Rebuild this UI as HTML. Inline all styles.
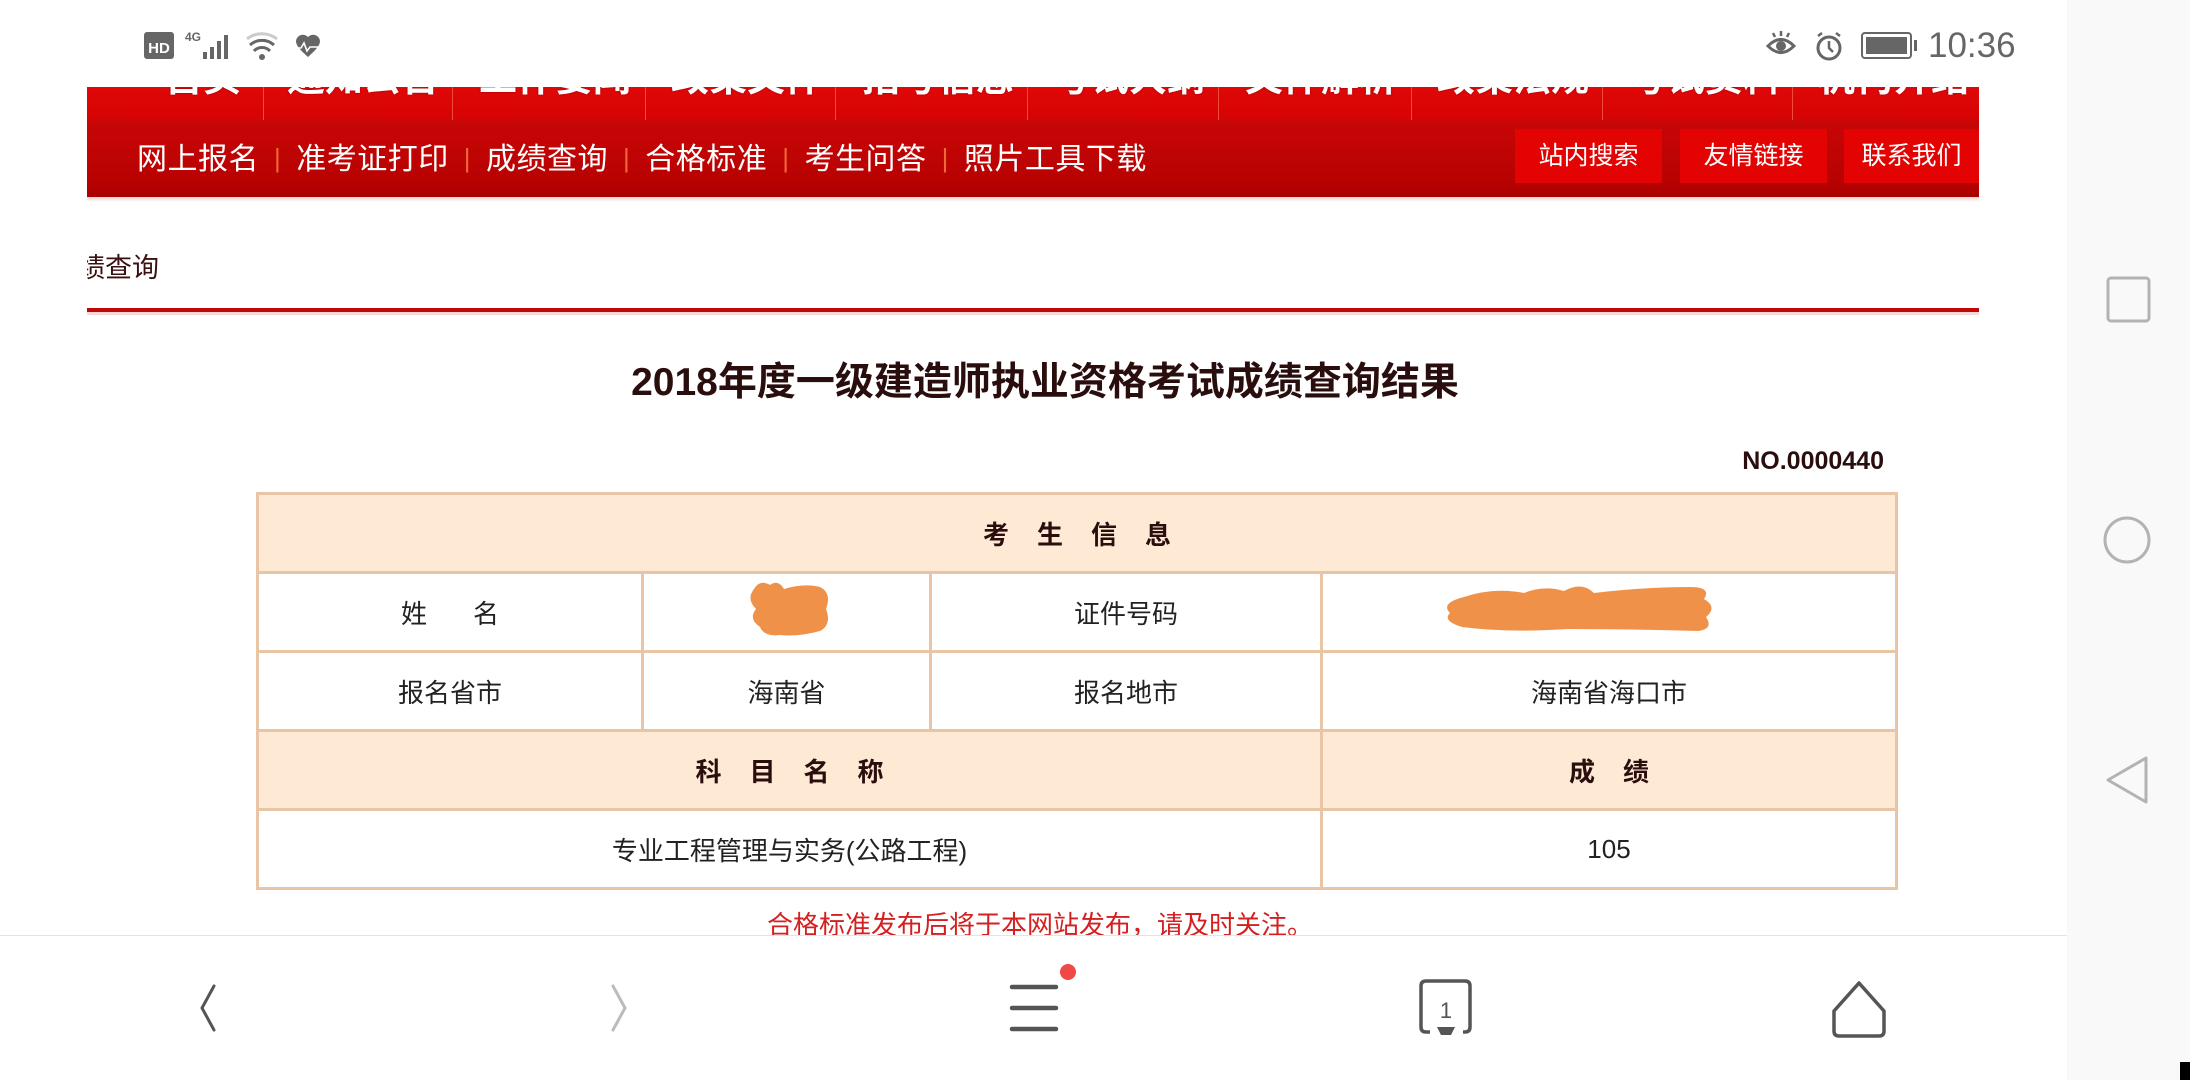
<!DOCTYPE html>
<html><head><meta charset="utf-8">
<style>
*{margin:0;padding:0;box-sizing:border-box}
body{width:2190px;height:1080px;overflow:hidden;background:#fff;position:relative;font-family:"Liberation Sans","Noto Sans CJK SC",sans-serif}
.abs{position:absolute}
.panel{left:2067px;top:0;width:123px;height:1080px;background:#f9f9f9}
.top{left:87px;top:87px;width:1892px;height:33px;background:linear-gradient(#e00808,#d50303);overflow:hidden}
.top span{position:absolute;top:-40px;color:#fff;font-weight:bold;font-size:38px;text-shadow:0 0 2px #900}
.top i{position:absolute;top:0;width:1px;height:33px;background:#f04a3a}
.sub{left:87px;top:120px;width:1892px;height:77px;background:linear-gradient(#c80606,#b80202 80%,#a80000)}
.sub .l{position:absolute;left:50px;top:14px;color:#fff;font-size:30px;letter-spacing:0.5px;white-space:nowrap}
.sub .l b{font-weight:normal;color:#f0683a;margin:0 15px;font-size:26px;position:relative;top:-2px}
.btn{position:absolute;top:9px;height:54px;background:#e30303;color:#fff;font-size:25px;text-align:center;line-height:54px}
table{position:absolute;left:256px;top:492px;width:1642px;border-collapse:collapse}
td{border:3px solid #e9c5a5;height:79px;text-align:center;font-size:26px;color:#222}
td.h{background:#fde9d4;color:#2a0e0e;font-weight:bold;letter-spacing:28px;padding-left:28px}
</style></head><body>
<svg class="abs" style="left:140px;top:26px" width="190" height="40" viewBox="0 0 190 40">
<rect x="4" y="6" width="30" height="27" rx="3" fill="#666"/>
<text x="19" y="27" font-size="15" font-weight="bold" fill="#fff" text-anchor="middle" font-family="Liberation Sans">HD</text>
<text x="45" y="15" font-size="12" font-weight="bold" fill="#666" font-family="Liberation Sans">4G</text>
<rect x="63" y="26" width="4" height="7" fill="#666"/><rect x="70" y="21" width="4" height="12" fill="#666"/><rect x="77" y="15" width="4" height="18" fill="#666"/><rect x="84" y="9" width="4" height="24" fill="#666"/>
<path d="M107 13a24 24 0 0 1 30 0" stroke="#ccc" stroke-width="3" fill="none"/>
<path d="M110 19a18 18 0 0 1 24 0M114 25a11 11 0 0 1 16 0" stroke="#666" stroke-width="3" fill="none"/>
<circle cx="122" cy="31" r="3" fill="#666"/>
<path d="M157 12a7 7 0 0 1 11-1a7 7 0 0 1 11 1c3 5-1 10-11 19c-10-9-14-14-11-19z" fill="#666"/>
<path d="M154 22h7l3-5l3 8l3-4h9" stroke="#fff" stroke-width="1.6" fill="none"/>
</svg>
<svg class="abs" style="left:1765px;top:28px" width="160" height="36" viewBox="0 0 160 36">
<path d="M3 18q13-13 26 0q-13 13-26 0z" stroke="#666" stroke-width="3" fill="none"/><circle cx="16" cy="18" r="5" fill="#666"/>
<path d="M16 3v5M8 5l2 4M24 5l-2 4" stroke="#666" stroke-width="2.5"/>
<circle cx="64" cy="20" r="11" stroke="#666" stroke-width="3" fill="none"/><path d="M64 13v7l4 4M53 8l4-3M75 8l-4-3" stroke="#666" stroke-width="2.5" fill="none"/>
<rect x="97" y="5" width="49" height="25" rx="3" stroke="#666" stroke-width="2" fill="none"/><rect x="101" y="9" width="41" height="17" fill="#666"/><rect x="149" y="12" width="3" height="11" fill="#666"/>
</svg>
<div class="abs" style="left:1928px;top:26px;font-size:35px;color:#666">10:36</div>
<div class="abs panel"></div>
<svg class="abs" style="left:2100px;top:270px" width="60" height="550" viewBox="0 0 60 550">
<rect x="8" y="8" width="41" height="43" rx="3" stroke="#b3b3b3" stroke-width="3" fill="none"/>
<circle cx="27" cy="270" r="22" stroke="#b3b3b3" stroke-width="3" fill="none"/>
<path d="M46 488v44l-38-22z" stroke="#b3b3b3" stroke-width="3" fill="none" stroke-linejoin="round"/>
</svg>
<div class="abs top">
<span style="left:78px">首页</span><i style="left:176px"></i>
<span style="left:200px">通知公告</span><i style="left:365px"></i>
<span style="left:392px">工作要闻</span><i style="left:558px"></i>
<span style="left:584px">政策文件</span><i style="left:748px"></i>
<span style="left:775px">招考信息</span><i style="left:940px"></i>
<span style="left:966px">考试大纲</span><i style="left:1131px"></i>
<span style="left:1158px">文件解析</span><i style="left:1324px"></i>
<span style="left:1350px">政策法规</span><i style="left:1515px"></i>
<span style="left:1542px">考试资料</span><i style="left:1705px"></i>
<span style="left:1730px">机构介绍</span>
</div>
<div class="abs sub">
<div class="l">网上报名<b>|</b>准考证打印<b>|</b>成绩查询<b>|</b>合格标准<b>|</b>考生问答<b>|</b>照片工具下载</div>
<div class="btn" style="left:1428px;width:147px">站内搜索</div>
<div class="btn" style="left:1593px;width:147px">友情链接</div>
<div class="btn" style="left:1757px;width:135px">联系我们</div>
</div>
<div class="abs" style="left:87px;top:197px;width:1892px;height:5px;background:linear-gradient(#f0d0d0,#fff)"></div>
<div class="abs" style="left:87px;top:246px;font-size:27px;color:#3a1010;width:72px;overflow:hidden;white-space:nowrap;direction:rtl">成绩查询</div>
<div class="abs" style="left:87px;top:308px;width:1892px;height:4px;background:#c00808"></div>
<div class="abs" style="left:87px;top:312px;width:1892px;height:3px;background:#f6d8d8"></div>
<div class="abs" style="left:0;top:351px;width:2090px;text-align:center;font-size:39px;font-weight:bold;color:#2a0e0e">2018年度一级建造师执业资格考试成绩查询结果</div>
<div class="abs" style="top:447px;width:1284px;text-align:right;font-size:25px;font-weight:bold;color:#2a0e0e;left:600px">NO.0000440</div>
<table>
<tr><td class="h" colspan="4">考生信息</td></tr>
<tr><td style="width:385px;letter-spacing:46px;padding-left:46px">姓名</td><td style="width:288px"></td><td style="width:391px">证件号码</td><td></td></tr>
<tr><td>报名省市</td><td>海南省</td><td>报名地市</td><td>海南省海口市</td></tr>
<tr><td class="h" colspan="3">科目名称</td><td class="h">成绩</td></tr>
<tr><td colspan="3">专业工程管理与实务(公路工程)</td><td>105</td></tr>
</table>
<svg class="abs" style="left:740px;top:575px" width="1050" height="70" viewBox="0 0 1050 70">
<path d="M14 14q6-10 16-4q8-6 14 4q20-6 36-2q12 6 6 22q6 16-6 22q-22 6-40 4q-16 2-20-8q-12-8-4-18q-10-10-2-20z" fill="#f0914a"/>
<path d="M724 22q30-10 60-4q20-8 40-2q18-10 30 2q50-6 96-6q22 0 14 12q14 8 2 18q8 12-8 14q-70-2-130-2q-60 4-106-2q-20-6-12-14q-10-10 14-16z" fill="#f0914a"/>
</svg>
<div class="abs" style="left:0;top:905px;width:2080px;text-align:center;font-size:26px;color:#d42020">合格标准发布后将于本网站发布，请及时关注。</div>
<div class="abs" style="left:0;top:935px;width:2067px;height:145px;background:#fff;border-top:1px solid #e4e4e4"></div>
<svg class="abs" style="left:0;top:940px" width="2067" height="140" viewBox="0 0 2067 140">
<path d="M214 46l-12 22l12 22" stroke="#555" stroke-width="3" fill="none" stroke-linecap="round"/>
<path d="M613 46l12 22l-12 22" stroke="#bbb" stroke-width="3" fill="none" stroke-linecap="round"/>
<path d="M1012 47h44M1012 68h44M1012 89h44" stroke="#555" stroke-width="4.5" stroke-linecap="round"/>
<circle cx="1068" cy="32" r="8" fill="#f04848"/>
<path d="M1430 92h-4q-5 0-5-5v-41q0-5 5-5h39q5 0 5 5v41q0 5-5 5h-2" stroke="#555" stroke-width="3.5" fill="none"/>
<text x="1446" y="78" font-size="22" fill="#555" text-anchor="middle" font-family="Liberation Sans">1</text>
<path d="M1437 87h18l-4 8h-10z" fill="#555"/>
<path d="M1859 43l-25 28v20q0 5 5 5h40q5 0 5-5v-20z" stroke="#555" stroke-width="3.5" fill="none" stroke-linejoin="round"/>
</svg>
<div class="abs" style="left:2180px;top:1062px;width:10px;height:18px;background:#000"></div>
</body></html>
